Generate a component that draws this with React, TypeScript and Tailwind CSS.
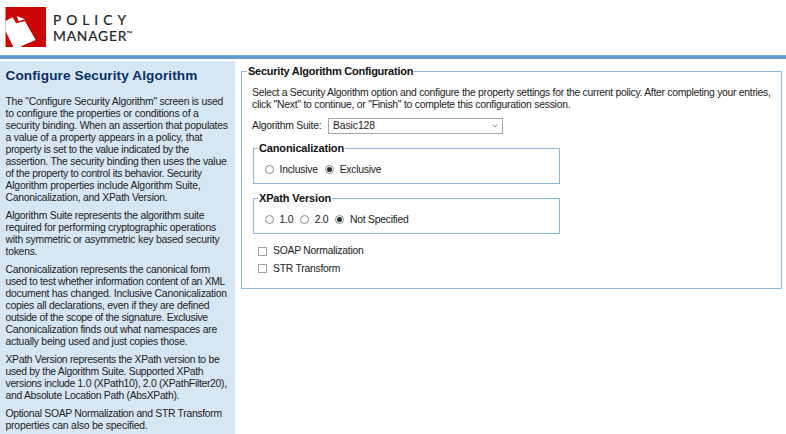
import type { ReactNode } from "react";

type Line = string | { text: string; tracking: string };

const tight = "tracking-[-0.31px]";
const loose = "tracking-[-0.21px]";

function Lines({ lines, className = "" }: { lines: Line[]; className?: string }) {
  return (
    <p className={`whitespace-nowrap ${className}`}>
      {lines.map((line) => {
        const text = typeof line === "string" ? line : line.text;
        const tracking = typeof line === "string" ? "" : line.tracking;
        return (
          <span key={text} className={`block ${tracking}`}>{text}</span>
        );
      })}
    </p>
  );
}

const help: Line[][] = [
  [
    'The "Configure Security Algorithm" screen is used',
    { text: "to configure the properties or conditions of a", tracking: loose },
    { text: "security binding. When an assertion that populates", tracking: loose },
    { text: "a value of a property appears in a policy, that", tracking: loose },
    { text: "property is set to the value indicated by the", tracking: tight },
    "assertion. The security binding then uses the value",
    { text: "of the property to control its behavior. Security", tracking: tight },
    { text: "Algorithm properties include Algorithm Suite,", tracking: loose },
    "Canonicalization, and XPath Version.",
  ],
  [
    "Algorithm Suite represents the algorithm suite",
    "required for performing cryptographic operations",
    "with symmetric or asymmetric key based security",
    "tokens.",
  ],
  [
    "Canonicalization represents the canonical form",
    { text: "used to test whether information content of an XML", tracking: tight },
    "document has changed. Inclusive Canonicalization",
    "copies all declarations, even if they are defined",
    { text: "outside of the scope of the signature. Exclusive", tracking: tight },
    "Canonicalization finds out what namespaces are",
    "actually being used and just copies those.",
  ],
  [
    { text: "XPath Version represents the XPath version to be", tracking: tight },
    { text: "used by the Algorithm Suite. Supported XPath", tracking: tight },
    { text: "versions include 1.0 (XPath10), 2.0 (XPathFilter20),", tracking: tight },
    { text: "and Absolute Location Path (AbsXPath).", tracking: tight },
  ],
  [
    { text: "Optional SOAP Normalization and STR Transform", tracking: tight },
    { text: "properties can also be specified.", tracking: loose },
  ],
];

function Radio({ label, checked = false, className = "" }: { label: string; checked?: boolean; className?: string }) {
  return (
    <label className={`flex items-center ${className}`}>
      <span className="mb-px flex size-[9px] shrink-0 items-center justify-center rounded-full border border-[#8b8b8b] bg-white">
        {checked && <span className="size-[5px] rounded-full bg-[#2b2b2b]" />}
      </span>
      <span className="ml-[5.5px]">{label}</span>
    </label>
  );
}

function Check({ label }: { label: string }) {
  return (
    <label className="flex h-[17.5px] items-center">
      <span className="size-[9px] border border-[#a3a3a3] bg-white" />
      <span className="ml-[6px]">{label}</span>
    </label>
  );
}

function Group({ title, children, className = "" }: { title: string; children: ReactNode; className?: string }) {
  return (
    <fieldset className={`h-[42px] w-[307px] border border-[#8bb8e2] pl-[11px] ${className}`}>
      <legend className="-ml-[7px] h-[13px] px-px text-[11px] leading-[13px] font-bold tracking-[-0.15px] text-[#111]">{title}</legend>
      <div className="mt-[8px] flex h-[14px] items-center">{children}</div>
    </fieldset>
  );
}

export default function App() {
  return (
    <div className="flex h-[434px] w-[786px] flex-col overflow-hidden bg-white font-['Liberation_Sans',Arial,sans-serif] text-[10.4px] leading-[12px] tracking-[-0.25px] text-[#222]">
      <header className="flex h-[55px] shrink-0 pt-[7px] pl-[5px]">
        <svg width="41" height="41" viewBox="0 0 41 41">
          <path d="M.5 0H41V40H.5Z" fill="#cb0505" />
          <path d="M.5 14 7.7 10.3 11 16.3 20 14.3 30.7 32.9 17.7 38.5 16 40H8.3L.5 24Z" fill="#fff" />
          <path d="M11.7 9 20 12.3 13.6 14.3Z" fill="#fff" />
        </svg>
        <svg width="90" height="40" viewBox="0 0 90 40" className="font-[Lato,sans-serif] tracking-normal" fill="#222" stroke="#222" strokeWidth=".2">
          <text x="7" y="17.7" fontSize="13.8" textLength="73">POLICY</text>
          <text x="7" y="33.8" fontSize="13.8" textLength="73.5">MANAGER</text>
          <text x="80.5" y="30" fontSize="8" stroke="none">™</text>
        </svg>
      </header>
      <div className="h-[4px] shrink-0 border-t border-[#79a7d8] bg-[#6199d0]" />
      <div className="mt-[2px] flex min-h-0 flex-1">
        <aside className="w-[235px] shrink-0 bg-[#d7e6f3] pt-[7px] pl-[5.5px]">
          <h1 className="mb-[12px] text-[13.6px] leading-[16px] font-bold tracking-[0.1px] whitespace-nowrap text-[#063067]">
            Configure Security Algorithm
          </h1>
          {help.map((lines, i) => (
            <Lines key={i} lines={lines} className="mb-[6px]" />
          ))}
        </aside>
        <main className="pt-[3px] pl-[6px]">
          <fieldset className="h-[225px] w-[541px] min-w-0 border border-[#8bb8e2] pl-[10px]">
            <legend className="-ml-[5px] h-[14px] px-px text-[11px] leading-[14px] font-bold tracking-[-0.25px] text-[#111]">
              Security Algorithm Configuration
            </legend>
            <Lines
              className="mt-[9px]"
              lines={[
                {
                  text: "Select a Security Algorithm option and configure the property settings for the current policy. After completing your entries,",
                  tracking: "tracking-[-0.29px]",
                },
                'click "Next" to continue, or "Finish" to complete this configuration session.',
              ]}
            />
            <div className="mt-[7px] flex items-center">
              <span className="w-[76px]">Algorithm Suite:</span>
              <div className="flex h-[16px] w-[175px] items-center justify-between border border-[#a7a7a7] pr-[4px] pl-[4px]">
                <span className="tracking-[-0.1px]">Basic128</span>
                <svg width="6" height="4" viewBox="0 0 6 4" fill="none" stroke="#888">
                  <path d="m.5.5 2.5 2.5L5.5.5" />
                </svg>
              </div>
            </div>
            <Group title="Canonicalization" className="mt-[8px] ml-[1px]">
              <Radio label="Inclusive" />
              <Radio label="Exclusive" checked className="ml-[7.5px]" />
            </Group>
            <Group title="XPath Version" className="mt-[8px] ml-[1px]">
              <Radio label="1.0" />
              <Radio label="2.0" className="ml-[7px]" />
              <Radio label="Not Specified" checked className="ml-[7px]" />
            </Group>
            <div className="mt-[8.5px] ml-[6px]">
              <Check label="SOAP Normalization" />
              <Check label="STR Transform" />
            </div>
          </fieldset>
        </main>
      </div>
    </div>
  );
}
